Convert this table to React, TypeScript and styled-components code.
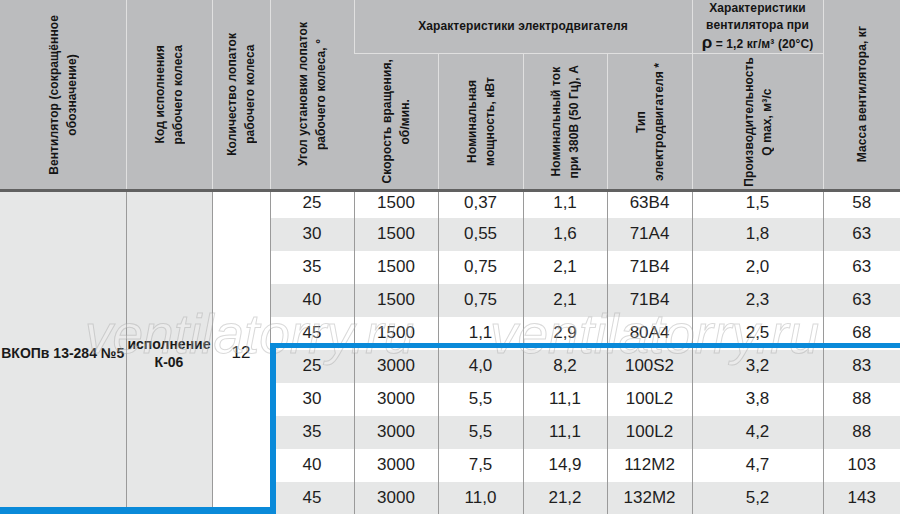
import React from "react";
import styled, { createGlobalStyle } from "styled-components";

const GlobalStyle = createGlobalStyle`
  html, body {
    margin: 0;
    padding: 0;
    background: #ffffff;
  }
`;

const FONT = `"Liberation Sans Narrow", "Arial Narrow", "Liberation Sans", Arial, sans-serif`;

interface RowType {
    angle: number;
    speed: number;
    power: string;
    current: string;
    motor: string;
    flow: string;
    mass: number;
}

const rows: RowType[] = [
    { angle: 25, speed: 1500, power: "0,37", current: "1,1", motor: "63B4", flow: "1,5", mass: 58 },
    { angle: 30, speed: 1500, power: "0,55", current: "1,6", motor: "71A4", flow: "1,8", mass: 63 },
    { angle: 35, speed: 1500, power: "0,75", current: "2,1", motor: "71B4", flow: "2,0", mass: 63 },
    { angle: 40, speed: 1500, power: "0,75", current: "2,1", motor: "71B4", flow: "2,3", mass: 63 },
    { angle: 45, speed: 1500, power: "1,1", current: "2,9", motor: "80A4", flow: "2,5", mass: 68 },
    { angle: 25, speed: 3000, power: "4,0", current: "8,2", motor: "100S2", flow: "3,2", mass: 83 },
    { angle: 30, speed: 3000, power: "5,5", current: "11,1", motor: "100L2", flow: "3,8", mass: 88 },
    { angle: 35, speed: 3000, power: "5,5", current: "11,1", motor: "100L2", flow: "4,2", mass: 88 },
    { angle: 40, speed: 3000, power: "7,5", current: "14,9", motor: "112M2", flow: "4,7", mass: 103 },
    { angle: 45, speed: 3000, power: "11,0", current: "21,2", motor: "132M2", flow: "5,2", mass: 143 },
];

const colWidths = [126, 86, 58, 84, 84, 85, 84, 85, 131, 77];

const Page = styled.div`
  position: relative;
  width: 900px;
  height: 514px;
  overflow: hidden;
  background: #ffffff;
  font-family: ${FONT};
`;

const Table = styled.table`
  width: 900px;
  border-collapse: collapse;
  table-layout: fixed;
  border-bottom: 1px solid #9a9a9a;
`;

const Head = styled.thead`
  border-bottom: 3px solid #616161;
`;

const HeadRow = styled.tr<{ $h: number }>`
  height: ${(p) => p.$h}px;
`;

const HeadCell = styled.th`
  background: #bbbcbe;
  border-left: 1px solid #e0e0e0;
  border-bottom: 1px solid #e0e0e0;
  padding: 0;
  vertical-align: middle;
  text-align: center;
  font-weight: 700;
  font-size: 12px;
  line-height: 17px;
  color: #141414;
  letter-spacing: 0.1px;
  overflow: hidden;

  &:first-child {
    border-left: none;
  }
`;

const VLabel = styled.div`
  display: inline-block;
  vertical-align: middle;
  writing-mode: vertical-rl;
  transform: rotate(180deg);
  text-align: center;
  line-height: 18px;
  white-space: nowrap;
`;

const Rho = styled.span`
  font-size: 17px;
`;

const Cell = styled.td`
  padding: 0;
  border-left: 1px solid #9a9a9a;
  text-align: center;
  vertical-align: middle;
  font-size: 17px;
  line-height: 20px;
  color: #1e1e1e;
`;

const Row = styled.tr<{ $alt: boolean; $h: number }>`
  height: ${(p) => p.$h}px;
  background: ${(p) => (p.$alt ? "#e6e7e7" : "#ffffff")};

  &:first-child > ${Cell} {
    padding-bottom: 4px;
  }
`;

const GroupCell = styled.td<{ $grey: boolean; $size: number; $bold: boolean }>`
  padding: 0;
  border-left: 1px solid #9a9a9a;
  text-align: center;
  vertical-align: middle;
  background: ${(p) => (p.$grey ? "#e6e7e7" : "#ffffff")};
  font-size: ${(p) => p.$size}px;
  font-weight: ${(p) => (p.$bold ? 700 : 400)};
  line-height: 18px;
  color: #1a1a1a;
  white-space: nowrap;

  &:first-child {
    border-left: none;
  }
`;

const Watermark = styled.span<{ $left: number }>`
  position: absolute;
  top: 307px;
  left: ${(p) => p.$left}px;
  font-family: "Liberation Sans", Arial, sans-serif;
  font-style: italic;
  font-size: 55px;
  line-height: 55px;
  letter-spacing: 0;
  color: rgba(255, 255, 255, 0.2);
  -webkit-text-stroke: 1px rgba(160, 160, 160, 0.4);
  pointer-events: none;
  white-space: nowrap;
`;

const Highlight = styled.div`
  position: absolute;
  top: 343px;
  left: 270px;
  right: 0;
  bottom: 0;
  border-top: 5px solid #0a8ad9;
  border-left: 6px solid #0a8ad9;
  pointer-events: none;

  &::after {
    content: "";
    position: absolute;
    left: -276px;
    bottom: 0;
    width: 276px;
    height: 7px;
    background: #0a8ad9;
  }
`;

const App = () => (
    <Page>
        <GlobalStyle />
        <Table>
            <colgroup>
                {colWidths.map((w, i) => (
                    <col key={i} style={{ width: w }} />
                ))}
            </colgroup>
            <Head>
                <HeadRow $h={52}>
                    <HeadCell rowSpan={2}>
                        <VLabel>Вентилятор (сокращённое<br />обозначение)</VLabel>
                    </HeadCell>
                    <HeadCell rowSpan={2}>
                        <VLabel>Код исполнения<br />рабочего колеса</VLabel>
                    </HeadCell>
                    <HeadCell rowSpan={2}>
                        <VLabel>Количество лопаток<br />рабочего колеса</VLabel>
                    </HeadCell>
                    <HeadCell rowSpan={2}>
                        <VLabel>Угол установки лопаток<br />рабочего колеса, °</VLabel>
                    </HeadCell>
                    <HeadCell colSpan={4}>Характеристики электродвигателя</HeadCell>
                    <HeadCell>
                        Характеристики<br />вентилятора при<br />
                        <Rho>ρ</Rho> = 1,2 кг/м³ (20°C)
                    </HeadCell>
                    <HeadCell rowSpan={2}>
                        <VLabel>Масса вентилятора, кг</VLabel>
                    </HeadCell>
                </HeadRow>
                <HeadRow $h={137}>
                    <HeadCell>
                        <VLabel>Скорость вращения,<br />об/мин.</VLabel>
                    </HeadCell>
                    <HeadCell>
                        <VLabel>Номинальная<br />мощность, кВт</VLabel>
                    </HeadCell>
                    <HeadCell>
                        <VLabel>Номинальный ток<br />при 380В (50 Гц), А</VLabel>
                    </HeadCell>
                    <HeadCell>
                        <VLabel>Тип<br />электродвигателя *</VLabel>
                    </HeadCell>
                    <HeadCell>
                        <VLabel>Производительность<br />Q max, м³/с</VLabel>
                    </HeadCell>
                </HeadRow>
            </Head>
            <tbody>
                {rows.map((r, i) => (
                    <Row key={i} $alt={i % 2 === 1} $h={i === 0 ? 27 : 33}>
                        {i === 0 && (
                            <>
                                <GroupCell rowSpan={rows.length} $grey $bold $size={14}>ВКОПв 13-284 №5</GroupCell>
                                <GroupCell rowSpan={rows.length} $grey $bold $size={14}>исполнение<br />К-06</GroupCell>
                                <GroupCell rowSpan={rows.length} $grey={false} $bold={false} $size={17}>12</GroupCell>
                            </>
                        )}
                        <Cell>{r.angle}</Cell>
                        <Cell>{r.speed}</Cell>
                        <Cell>{r.power}</Cell>
                        <Cell>{r.current}</Cell>
                        <Cell>{r.motor}</Cell>
                        <Cell>{r.flow}</Cell>
                        <Cell>{r.mass}</Cell>
                    </Row>
                ))}
            </tbody>
        </Table>
        <Watermark $left={85}>ventilatorry.ru</Watermark>
        <Watermark $left={490}>ventilatorry.ru</Watermark>
        <Highlight />
    </Page>
);

export default App;
